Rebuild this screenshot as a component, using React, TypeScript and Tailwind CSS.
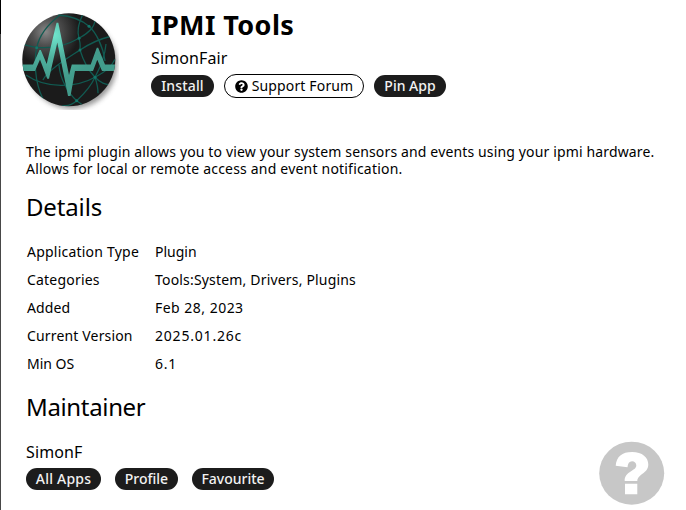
import clsx from "clsx";
import { FaQuestionCircle } from "react-icons/fa";

const details = [
  { label: "Application Type", value: "Plugin", labelClass: "tracking-[0.22px]", valueClass: "tracking-[0px]" },
  { label: "Categories", value: "Tools:System, Drivers, Plugins", labelClass: "tracking-[0.2px]", valueClass: "tracking-[0.18px]" },
  { label: "Added", value: "Feb 28, 2023", labelClass: "tracking-[0.1px]", valueClass: "tracking-[0.48px]" },
  { label: "Current Version", value: "2025.01.26c", labelClass: "tracking-[0.16px]", valueClass: "tracking-[0.8px]" },
  { label: "Min OS", value: "6.1", labelClass: "tracking-[0px]", valueClass: "tracking-[0.7px]" },
];

function Pill({ children, className }: { children: React.ReactNode; className?: string }) {
  return (
    <button
      className={clsx(
        "flex h-[22px] items-center justify-center rounded-full bg-[#1c1c1c] text-[14px] leading-none font-medium whitespace-nowrap text-[#f2f2f2]",
        className
      )}
    >
      {children}
    </button>
  );
}

function AppLogo() {
  return (
    <svg className="block h-[97px] w-[97px]" viewBox="0 0 97 97">
      <defs>
        <clipPath id="ball">
          <circle cx="46.800" cy="46.700" r="46.500" />
        </clipPath>
        <radialGradient id="shine" cx="0.25" cy="0.2" r="0.36">
          <stop offset="0" stopColor="#888" />
          <stop offset="0.4" stopColor="#505050" />
          <stop offset="1" stopColor="#1b1b1b" />
        </radialGradient>
        <radialGradient id="pulse" gradientUnits="userSpaceOnUse" cx="32" cy="22" r="45">
          <stop offset="0" stopColor="#70e5cd" />
          <stop offset="0.5" stopColor="#4fb29f" />
          <stop offset="1" stopColor="#429b8b" />
        </radialGradient>
        <filter id="soft" x="-20%" y="-20%" width="140%" height="140%">
          <feGaussianBlur stdDeviation="2.5" />
        </filter>
      </defs>
      <circle cx="50" cy="51" r="45" fill="#777" opacity="0.75" filter="url(#soft)" />
      <circle cx="46.800" cy="46.700" r="46.500" fill="url(#shine)" />
      <g clipPath="url(#ball)">
        <g stroke="#115a51" strokeWidth="1.3" fill="none">
          <path d="M38 2C25 12 17 23 14.700 34.700S12 68 21 86" />
          <path d="M0 31C22 38 40 35 57 25.300S72 10 74 5" />
          <path d="M4 62c20 14 50 13 69 2.300s17-14 20-18" />
          <path d="M61 1C56 12 55 18 57 25.300S58 31 58 37c4 13 9 21 15 27.300s11 7 16 8" />
          <path d="M36 2c12 1 24 5 31 11.300S81 33 83 48" />
          <path d="M90 23C77 26 67 31 58 37S26 56 21 67" />
          <path d="M73 64.300C69 73 62 81 54.700 87.700S44 92 40 93" />
          <path d="M37 52c1 14 9 28 17.700 35.700l7 5" />
          <path d="M73 64.300C79 53 83 43 84 31" />
          <path d="M73 64.300c2 6 3 10 3 16" />
        </g>
        <g fill="#14776b">
          <circle cx="14.700" cy="34.700" r="1.500" />
          <circle cx="57" cy="25.300" r="1.500" />
          <circle cx="58" cy="37" r="1.500" />
          <circle cx="67" cy="13.300" r="1.500" />
          <circle cx="73" cy="64.300" r="1.500" />
          <circle cx="54.700" cy="87.700" r="1.500" />
        </g>
        <path
          fill="url(#pulse)"
          d="M0 51.500H11L17.500 37H18.800L24.700 51L34.500 9.700H36.300L47 62L49.800 51.500H68.700L74.800 34.700H76.200L83 51.500H94V58H80L75.300 46.800L71 58H53L48.500 83H46L35.300 29.500L27 65.700H25.200L18 46.500L13 58H0Z"
        />
      </g>
    </svg>
  );
}

export default function App() {
  return (
    <div className="flex h-[510px] w-[686px] overflow-hidden bg-white font-['Noto_Sans',sans-serif] text-black">
      <div className="flex w-px shrink-0 flex-col">
        <div className="h-[34px] bg-black" />
        <div className="flex-1 bg-[#484848]" />
      </div>
      <main className="relative flex-1 pl-[25px]">
        <header className="flex h-[143px]">
          <div className="-ml-[4px] w-[129px] shrink-0 pt-[13px]">
            <AppLogo />
          </div>
          <div className="whitespace-nowrap">
            <h1 className="mt-[8px] text-[27px] leading-[34px] font-bold tracking-[0.4px]">IPMI Tools</h1>
            <p className="mt-[6px] text-[16px] leading-[20px] tracking-[0.12px]">SimonFair</p>
            <div className="mt-[6px] flex items-center">
              <Pill className="w-[63px] tracking-[0.15px]">Install</Pill>
              <button className="ml-[10px] flex h-[24px] w-[140px] items-center justify-center gap-[4px] rounded-full border border-black text-[14px] leading-none tracking-[0.15px] whitespace-nowrap">
                <FaQuestionCircle className="size-[13px]" />
                Support Forum
              </button>
              <Pill className="ml-[10px] w-[72px]">Pin App</Pill>
            </div>
          </div>
        </header>
        <p className="flex flex-col text-[14px] leading-[17px] whitespace-nowrap">
          <span className="tracking-[0.145px]">
            The ipmi plugin allows you to view your system sensors and events using your ipmi hardware.
          </span>
          <span className="tracking-[0.2px]">Allows for local or remote access and event notification.</span>
        </p>
        <h2 className="mt-[14px] text-[24px] leading-[32px] tracking-[-0.15px]">Details</h2>
        <div className="mt-[15px] ml-px text-[14px] leading-[28px] whitespace-nowrap">
          {details.map((row) => (
            <div key={row.label} className="flex">
              <span className={clsx("w-[128px]", row.labelClass)}>{row.label}</span>
              <span className={row.valueClass}>{row.value}</span>
            </div>
          ))}
        </div>
        <h2 className="mt-[13px] text-[24px] leading-[32px] tracking-[-0.35px]">Maintainer</h2>
        <p className="mt-[19px] text-[16px] leading-[20px] tracking-[0.12px]">SimonF</p>
        <div className="mt-[6px] flex">
          <Pill className="w-[75px] tracking-[0.2px]">All Apps</Pill>
          <Pill className="ml-[14px] w-[63px]">Profile</Pill>
          <Pill className="ml-[14px] w-[82px]">Favourite</Pill>
        </div>
        <button className="absolute top-[441px] left-[598px]" aria-label="Help">
          <svg className="block h-[64px] w-[66px]" viewBox="0 0 66 64">
            <ellipse cx="32.700" cy="32.200" rx="32.500" ry="31.500" fill="#c7c7c7" />
            <path
              fill="#fff"
              d="M16.700 24.800C17.500 15.500 23 11 33 11C43.500 11 49.300 16.500 49.300 23.500C49.300 32.500 38.500 33 38.300 40H25.700C25.300 30.500 37.300 30 37.300 24.500C37.300 22 35.500 20.300 33 20.300C30.300 20.300 28.800 22.500 28.500 26.300ZM26 42.700H38.300V53.300H26Z"
            />
          </svg>
        </button>
      </main>
    </div>
  );
}
